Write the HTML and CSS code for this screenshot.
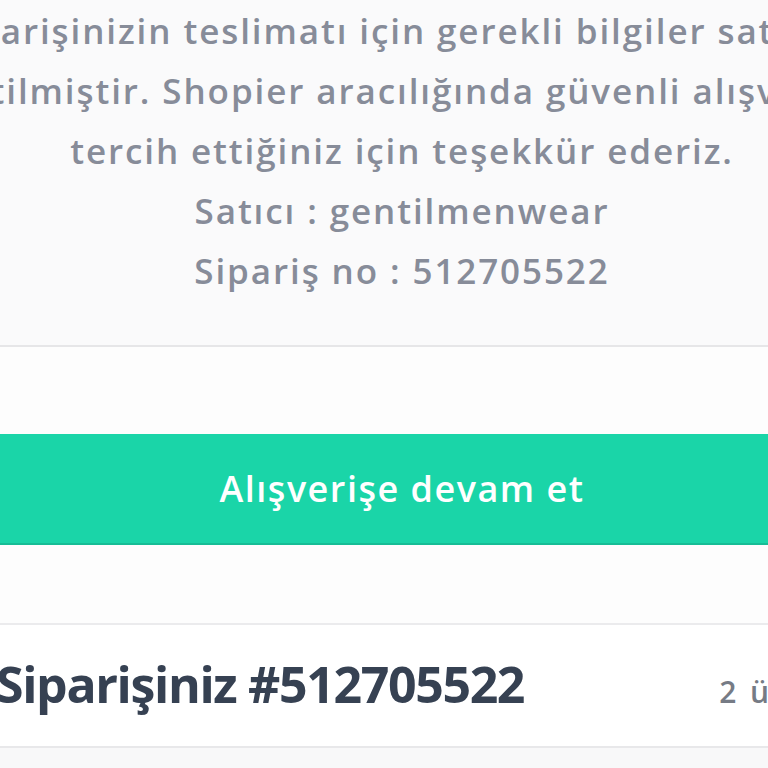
FILE: index.html
```html
<!DOCTYPE html>
<html lang="tr">
<head>
<meta charset="utf-8">
<link rel="stylesheet" href="styles.css">
</head>
<body>
<div class="page">
  <section class="info">
    <span class="line">Siparişinizin teslimatı için gerekli bilgiler satıcıya</span>
    <span class="line">iletilmiştir. Shopier aracılığında güvenli alışverişi</span>
    <span class="line">tercih ettiğiniz için teşekkür ederiz.</span>
    <span class="line">Satıcı : gentilmenwear</span>
    <span class="line">Sipariş no : 512705522</span>
  </section>
  <section class="action">
    <button class="btn">Alışverişe devam et</button>
  </section>
  <section class="order">
    <h2 class="order-title">Siparişiniz #512705522</h2>
    <span class="order-count">2 ürün</span>
  </section>
  <div class="rest"></div>
</div>
</body>
</html>
```

FILE: styles.css
```css
html, body {
  margin: 0;
  padding: 0;
  background: #f8f8f9;
  overflow: hidden;
  width: 768px;
  height: 768px;
}
.page {
  font-family: "Open Sans", Inter, sans-serif;
  width: 768px;
}
.info {
  display: flex;
  flex-direction: column;
  align-items: center;
  background: #fafafb;
  border-bottom: 2px solid #e6e6e8;
  height: 347px;
  box-sizing: border-box;
  margin: 0 -100px 0 -64px;
  color: #878c99;
  font-size: 35px;
  font-weight: 600;
  line-height: 60px;
  letter-spacing: 1.9px;
  padding-top: 1px;
}
.line {
  display: block;
  white-space: nowrap;
}
.action {
  background: #fdfdfd;
  padding-top: 87px;
  padding-bottom: 78px;
  border-bottom: 2px solid #ebebed;
  margin: 0 -20px;
}
.btn {
  display: block;
  width: 100%;
  height: 111px;
  border: none;
  border-bottom: 2px solid #17bd96;
  background: #1ad5a8;
  color: #ffffff;
  font-family: "Open Sans", Inter, sans-serif;
  font-size: 36px;
  font-weight: 600;
  letter-spacing: 1.5px;
  padding: 0 0 0 36px;
  text-align: center;
}
.order {
  background: #ffffff;
  height: 123px;
  box-sizing: border-box;
  border-bottom: 2px solid #e8e8ea;
  display: flex;
  align-items: baseline;
  column-gap: 195px;
  margin-left: -4px;
  margin-right: -200px;
  padding-top: 29px;
}
.order-title {
  margin: 0;
  color: #364152;
  font-size: 50px;
  line-height: 60px;
  font-weight: 700;
  letter-spacing: -1.35px;
  white-space: nowrap;
}
.order-count {
  color: #767b85;
  font-size: 30px;
  font-weight: 600;
  letter-spacing: 3px;
  white-space: nowrap;
}
.rest {
  height: 40px;
  background: #f8f8f9;
}
```
